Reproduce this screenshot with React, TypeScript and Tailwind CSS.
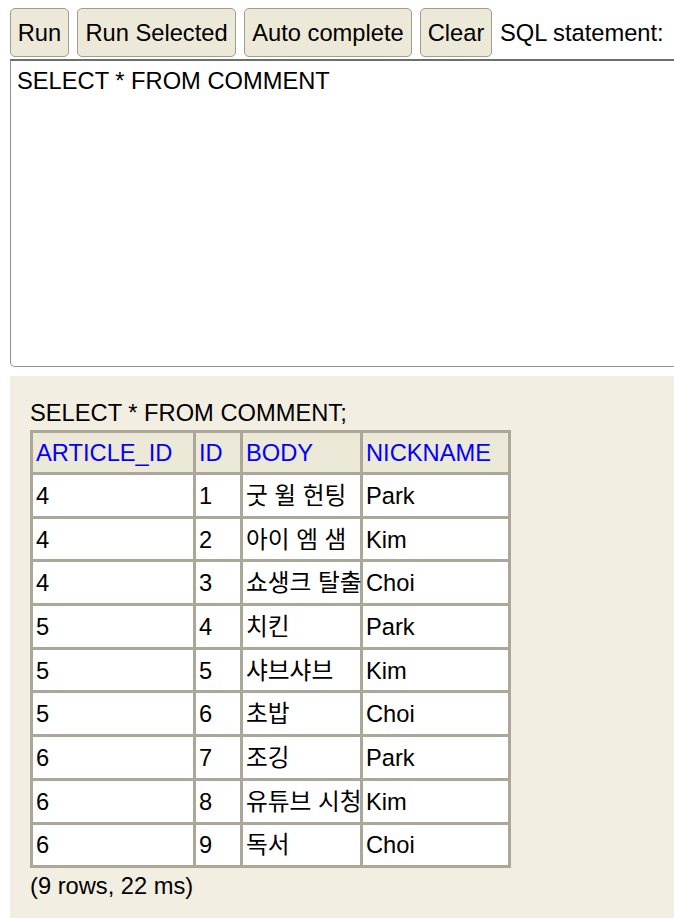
import React from "react";

const rows: [string, string, string, string][] = [
  ["4", "1", "굿 윌 헌팅", "Park"],
  ["4", "2", "아이 엠 샘", "Kim"],
  ["4", "3", "쇼생크 탈출", "Choi"],
  ["5", "4", "치킨", "Park"],
  ["5", "5", "샤브샤브", "Kim"],
  ["5", "6", "초밥", "Choi"],
  ["6", "7", "조깅", "Park"],
  ["6", "8", "유튜브 시청", "Kim"],
  ["6", "9", "독서", "Choi"],
];

const headers = ["ARTICLE_ID", "ID", "BODY", "NICKNAME"];

function Btn({ label, w }: { label: string; w: string }) {
  return (
    <button
      className={`${w} h-[49px] shrink-0 rounded-[5px] border border-[#a09e90] bg-[#ece9d8] pt-[2px] text-center text-[23.7px] leading-[27px] text-black`}
    >
      {label}
    </button>
  );
}

export default function App() {
  return (
    <div
      className="w-[674px] h-[918px] overflow-hidden bg-white text-black"
      style={{ fontFamily: '"Liberation Sans", Arial, "Noto Sans CJK KR", sans-serif' }}
    >
      <div className="flex items-center gap-[8px] pl-[10px] pt-[8px] whitespace-nowrap">
        <Btn label="Run" w="w-[59px]" />
        <Btn label="Run Selected" w="w-[159px]" />
        <Btn label="Auto complete" w="w-[168px]" />
        <Btn label="Clear" w="w-[72px]" />
        <span className="pt-[2px] text-[23.7px] leading-[27px]">SQL statement:</span>
      </div>
      <div className="pl-[10px] pt-[2px]">
        <textarea
          readOnly
          value="SELECT * FROM COMMENT"
          className="block w-[720px] h-[308px] resize-none rounded-bl-[5px] border border-[#8f8f8f] border-t-2 border-t-[#6e6e6e] bg-white px-[6px] pt-[7px] text-[23.7px] leading-[27px] text-black outline-none"
          style={{ fontFamily: '"Liberation Sans", Arial, sans-serif' }}
        />
      </div>
      <div className="ml-[10px] mt-[9px] h-[542px] bg-[#f2efe2] pl-[20px] pt-[24px] text-[23.7px] leading-[27px]">
        <div>SELECT * FROM COMMENT;</div>
        <div className="mt-[3px] grid w-max grid-cols-[163px_47px_120px_148px] border-l-[3px] border-t-[3px] border-[#aca899]">
          {headers.map((h) => (
            <div
              key={h}
              className="flex h-[42px] items-center border-b-[3px] border-r-[3px] border-[#aca899] bg-[#ece9d8] pl-[3px] pt-[2px] text-[#0000ff] whitespace-nowrap"
            >
              {h}
            </div>
          ))}
          {rows.map((r, i) =>
            r.map((c, j) => (
              <div
                key={`${i}-${j}`}
                className="flex h-[43.7px] items-center border-b-[3px] border-r-[3px] border-[#aca899] bg-white pl-[3px] pt-[2px] whitespace-nowrap"
              >
                {c}
              </div>
            ))
          )}
        </div>
        <div className="mt-[5px]">(9 rows, 22 ms)</div>
      </div>
    </div>
  );
}
